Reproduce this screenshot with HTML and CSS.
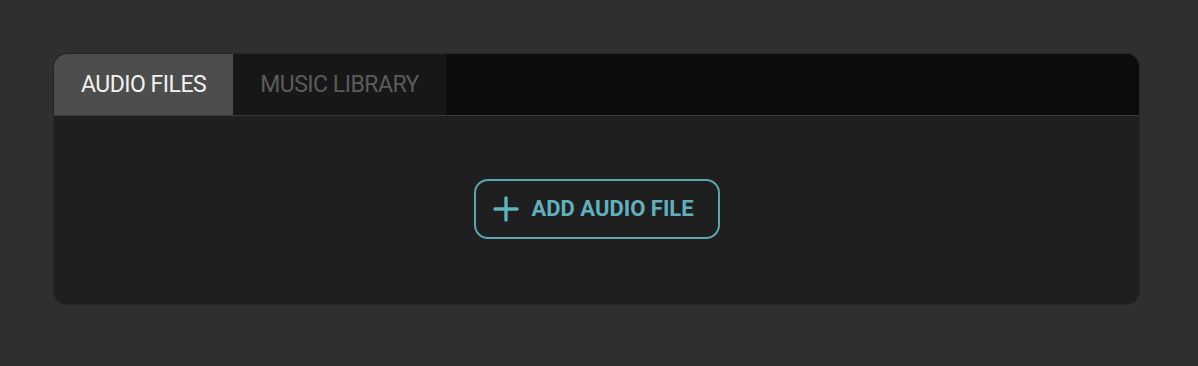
FILE: index.html
```html
<!DOCTYPE html>
<html>
<head>
    <title>Audio</title>
    <link rel="stylesheet" href="styles.css">
</head>
<body>
    <div class="panel">
        <div class="tabs">
            <div class="tab active">AUDIO FILES</div>
            <div class="tab">MUSIC LIBRARY</div>
        </div>
        <div class="content">
            <button class="add-btn">
                <svg width="26" height="26" viewBox="0 0 26 26">
                    <path d="M13 2v22M2 13h22" stroke="currentColor" stroke-width="3.4" stroke-linecap="round"/>
                </svg>
                ADD AUDIO FILE
            </button>
        </div>
    </div>
</body>
</html>
```
FILE: styles.css
```css
body {
    font-family: Roboto, "Liberation Sans", sans-serif;
    background-color: #2f2f2f;
    margin: 0;
    padding: 54px;
}
.panel {
    width: 1085px;
    height: 250px;
    background-color: #1f1f1f;
    border-radius: 13px;
    overflow: hidden;
    display: flex;
    flex-direction: column;
    box-shadow: 0 0 0 1px #262626;
}
.tabs {
    display: flex;
    height: 61px;
    background-color: #0c0c0c;
    border-bottom: 1px solid #3a3a3a;
}
.tab {
    display: flex;
    align-items: center;
    padding: 0 27px;
    font-size: 23px;
    letter-spacing: -0.5px;
    color: #5b5b5b;
    background-color: #171717;
}
.tab.active {
    background-color: #4d4d4d;
    color: #f2f2f2;
}
.content {
    flex: 1;
    display: flex;
    justify-content: center;
    align-items: center;
}
.add-btn {
    display: flex;
    align-items: center;
    gap: 13px;
    width: 246px;
    height: 60px;
    padding: 0 17px;
    background: transparent;
    border: 2px solid #5aa7b3;
    border-radius: 14px;
    color: #5fb1be;
    font-family: Roboto, "Liberation Sans", sans-serif;
    font-size: 22px;
    font-weight: bold;
    letter-spacing: 0;
    margin-top: -3px;
}
```
